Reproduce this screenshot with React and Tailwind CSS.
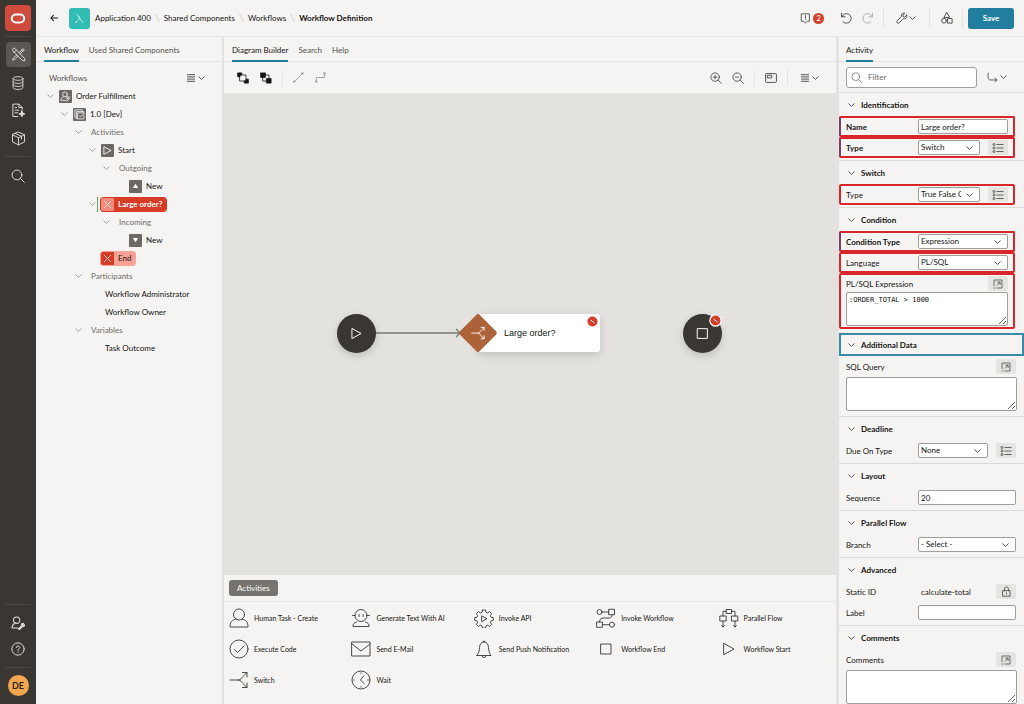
import React from 'react';

function Icon({ size = 12, sw = 1.3, className = '', children }) {
  return (
    <svg
      width={size}
      height={size}
      viewBox="0 0 20 20"
      fill="none"
      stroke="currentColor"
      strokeWidth={sw}
      strokeLinecap="round"
      strokeLinejoin="round"
      className={`shrink-0 ${className}`}
      aria-hidden="true"
    >
      {children}
    </svg>
  );
}

const Chevron = ({ className = '' }) => (
  <svg width="7" height="4" viewBox="0 0 7 4" fill="none" stroke="currentColor" strokeWidth="0.9" className={`shrink-0 ${className}`} aria-hidden="true">
    <path d="M.5 .5 3.5 3.4 6.5 .5" />
  </svg>
);

const ListIcon = () => (
  <svg width="8" height="8" viewBox="0 0 8 8" stroke="currentColor" strokeWidth="0.9" className="shrink-0" aria-hidden="true">
    <path d="M0 .7h8M0 2.9h8M0 5.1h8M0 7.3h8" />
  </svg>
);

/* ---------- Navigation rail ---------- */

const railButton = 'flex h-[25px] w-[25px] items-center justify-center rounded-[4px] text-[#dedbd7]';

function Rail() {
  return (
    <nav className="flex w-9 shrink-0 flex-col items-center bg-[#3a3632] pt-[5px] pb-2">
      <a href="#home" aria-label="Home" className="flex h-[26px] w-[26px] items-center justify-center rounded-[4px] bg-[#cf4b3e]">
        <svg width="16" height="11" viewBox="0 0 16 11" aria-hidden="true">
          <rect x="1.8" y="1.5" width="12.4" height="8" rx="4" fill="none" stroke="#fff" strokeWidth="2" />
        </svg>
      </a>
      <div className="mt-[5px] mb-[5px] h-px w-[26px] bg-[#4c4844]" />
      <div className="flex flex-col gap-[3px]">
        <button aria-label="App Builder" className={`${railButton} bg-[#5b5752]`}>
          <Icon size={15} sw={1.3}>
            <path d="M2 4.2a2.2 2.2 0 0 1 3.2-2.4L18 15.2l.5 3.3-3.3-.5L2.6 5.4ZM4.3 6.9 6.9 4.3" />
            <path d="M12.3 9.2 17.8 3.7l-1.6-1.6L10.6 7.7M9.3 12.3 4.8 16.8l-2.6.8.8-2.6L7.6 10.6M14.7 3.6l1.7 1.7" />
          </Icon>
        </button>
        <button aria-label="SQL Workshop" className={railButton}>
          <Icon size={14}>
            <ellipse cx="10" cy="3.6" rx="7" ry="2.6" />
            <path d="M3 3.6v13c0 1.5 3.2 2.6 7 2.6s7-1.1 7-2.6v-13M3 8c0 1.5 3.2 2.6 7 2.6S17 9.5 17 8M3 12.3c0 1.5 3.2 2.6 7 2.6s7-1.1 7-2.6" />
          </Icon>
        </button>
        <button aria-label="Page Designer" className={railButton}>
          <Icon size={15}>
            <path d="M9 18H2.5V1.5h8L15 6v3M10.5 1.5V6H15M5.5 6h2M5.5 9.5h5M5.5 13H9" />
            <path d="m14.5 10.5 1.1 2.9 2.9 1.1-2.9 1.1-1.1 2.9-1.1-2.9-2.9-1.1 2.9-1.1Z" fill="currentColor" />
          </Icon>
        </button>
        <button aria-label="Components" className={railButton}>
          <Icon size={15}>
            <path d="M10 1.5 18 5v9.5l-8 4-8-4V5ZM2 5l8 4 8-4M10 9v9.5M6 3.3l8 3.9v3.5" />
          </Icon>
        </button>
      </div>
      <div className="mt-[5px] mb-[6px] h-px w-[26px] bg-[#4c4844]" />
      <button aria-label="Search" className={railButton}>
        <Icon size={14} sw={1.4}>
          <circle cx="8.5" cy="8.5" r="7" />
          <path d="m13.6 13.6 5.400 5.400" />
        </Icon>
      </button>
      <div className="mt-auto h-px w-[26px] bg-[#4c4844]" />
      <div className="mt-[5px] mb-[6px] flex flex-col gap-px">
        <button aria-label="Administration" className={railButton}>
          <Icon size={14} sw={1.5}>
            <circle cx="8" cy="6" r="4.5" />
            <path d="M10 17H1.5c0-3.5 1-5 4.5-6.5" />
            <path d="M10.5 18.5 15 14c-.8-2 .5-4 2.800-3.600l-1 1.800 1 1 1.500-.8c.3 2.200-1.500 3.500-3.200 2.800L12 19.600Z" fill="currentColor" />
          </Icon>
        </button>
        <button aria-label="Help" className={railButton}>
          <Icon size={14} sw={1.4}>
            <circle cx="10" cy="10" r="8.800" />
            <path d="M7.500 8c0-3.300 5-3.300 5 0 0 1.800-2.500 1.800-2.500 4M10 14.200v.4" />
          </Icon>
        </button>
      </div>
      <div className="mb-[7px] h-px w-[26px] bg-[#4c4844]" />
      <button aria-label="Account" className="flex h-[21px] w-[21px] items-center justify-center rounded-full bg-[#f3a550] text-[9px] font-bold text-[#2a2725]">DE</button>
    </nav>
  );
}

/* ---------- Header ---------- */

const Slash = () => (
  <svg width="5" height="10" viewBox="0 0 5 10" stroke="#cfccc8" strokeWidth="0.8" aria-hidden="true">
    <path d="M.5 .5 4.500 9.500" />
  </svg>
);

const VLine = () => <div className="h-5 w-px bg-[#e4e2df]" />;

function Header() {
  return (
    <header className="flex h-[37px] shrink-0 items-center border-b border-[#e8e6e3] pr-[10px] pl-[14px]">
      <button aria-label="Back" className="mr-[11px] text-[#161513]">
        <Icon size={8} sw={2.600}>
          <path d="M19 10H2M8.500 3.500 2 10l6.500 6.500" />
        </Icon>
      </button>
      <div className="mr-[5px] flex h-[21px] w-[21px] items-center justify-center rounded-[3px] bg-[#31bdb4] text-[#c9f1ed]">
        <Icon size={13} sw={1.4}>
          <path d="M6 3.500 10.500 10 15.500 16.500M10.500 10 4 16M10.500 10l-1-3M4 16l1.500-.3" />
        </Icon>
      </div>
      <nav aria-label="Breadcrumb" className="flex items-center gap-1 whitespace-nowrap">
        <a href="#app">Application 400</a>
        <Slash />
        <a href="#shared">Shared Components</a>
        <Slash />
        <a href="#workflows">Workflows</a>
        <Slash />
        <a href="#definition" aria-current="page" className="font-bold">Workflow Definition</a>
      </nav>
      <div className="ml-auto flex items-center text-[#45413d]">
        <button aria-label="Messages" className="mr-4 flex items-center gap-[2px]">
          <Icon size={11} sw={1.500}>
            <path d="M3 1.500h14v13.500h-4l-3 3.500-3-3.500H3ZM10 4.500v4.500M10 11.500v.5" />
          </Icon>
          <span className="flex h-[11px] w-[11px] items-center justify-center rounded-full bg-[#d0402b] text-[8px] leading-none text-white">2</span>
        </button>
        <button aria-label="Undo" className="mr-[10px]">
          <Icon size={12} sw={1.500}>
            <path d="M2.500 2v6h6M3 8a8 8 0 1 1 2 8.500" />
          </Icon>
        </button>
        <button aria-label="Redo" className="mr-[9px] text-[#aba8a4]">
          <Icon size={12} sw={1.500}>
            <path d="M17.500 2v6h-6M17 8a8 8 0 1 0-2 8.500" />
          </Icon>
        </button>
        <VLine />
        <button aria-label="Utilities" className="mr-[13px] ml-3 flex items-center gap-px">
          <Icon size={12} sw={1.500}>
            <path d="M17.800 5.200 14.500 8.300l-2.600-.5-.5-2.600L14.600 2C11.500.8 8 3.500 9 7.500l-7.200 7.300c-1.800 2 1.400 5.200 3.400 3.400L12.400 11c4 1.200 7-2.300 5.400-5.800Z" />
          </Icon>
          <Chevron />
        </button>
        <VLine />
        <button aria-label="Shared components" className="mr-[9px] ml-[11px]">
          <Icon size={12} sw={1.500}>
            <path d="M10 1 14.500 9h-9Z" />
            <circle cx="5" cy="14.500" r="4" />
            <path d="M11.500 11h7v7.500h-7Z" />
          </Icon>
        </button>
        <VLine />
        <button className="ml-[5px] h-[21px] w-[46px] rounded-[3px] bg-[#227e9e] font-bold text-white">Save</button>
      </div>
    </header>
  );
}

/* ---------- Tabs ---------- */

function Tabs({ items, className = '' }) {
  return (
    <div role="tablist" className={`flex h-[25px] shrink-0 gap-[10px] border-b border-[#e4e2df] ${className}`}>
      {items.map((t, i) => (
        <button
          key={t}
          role="tab"
          aria-selected={i === 0}
          className={`-mb-px border-b-2 pt-[2px] whitespace-nowrap ${
            i === 0 ? 'border-[#227e9e] text-[#161513]' : 'border-transparent text-[#55514d]'
          }`}
        >
          {t}
        </button>
      ))}
    </div>
  );
}

/* ---------- Workflow tree ---------- */

const tileIcons = {
  person: (
    <Icon size={11} sw={1.4} className="text-white">
      <circle cx="9" cy="6" r="4.300" />
      <path d="M11 17H1.500c0-3.500 1-5 5-6.300M12 10.500l2-.5M11 13l6 1.500-5 4M14 12l4-1" />
    </Icon>
  ),
  version: (
    <Icon size={11} sw={1.3} className="text-white">
      <path d="M4 15H1.500V1.500H15V4M6 17.500H4.500V4.500h13V6M7 7h11v11H7ZM10 12.500l2 2 3.500-4" />
    </Icon>
  ),
  play: (
    <Icon size={11} sw={1.600} className="text-white">
      <path d="M4 3.500 16.500 10 4 16.500Z" />
    </Icon>
  ),
  up: (
    <svg width="7" height="6" viewBox="0 0 7 6" fill="#fff" aria-hidden="true"><path d="M3.500 .8 6.200 5H.8Z" /></svg>
  ),
  down: (
    <svg width="7" height="6" viewBox="0 0 7 6" fill="#fff" aria-hidden="true"><path d="M3.500 5.200 6.200 1H.8Z" /></svg>
  ),
  cross: (
    <Icon size={11} sw={1.3} className="text-white">
      <path d="m4 4 12 12M16 4 4 16" />
    </Icon>
  ),
};

const indent = ['pl-[10px]', 'pl-[24px]', 'pl-[38px]', 'pl-[52px]', 'pl-[66px]', 'pl-[80px]'];

const tree = [
  { level: 0, open: true, icon: 'person', text: 'Order Fulfillment' },
  { level: 1, open: true, icon: 'version', text: '1.0 [Dev]' },
  { level: 2, open: true, muted: true, text: 'Activities' },
  { level: 3, open: true, icon: 'play', text: 'Start' },
  { level: 4, open: true, muted: true, text: 'Outgoing' },
  { level: 5, icon: 'up', text: 'New' },
  { level: 3, open: true, icon: 'cross', text: 'Large order?', state: 'selected' },
  { level: 4, open: true, muted: true, text: 'Incoming' },
  { level: 5, icon: 'down', text: 'New' },
  { level: 3, icon: 'cross', text: 'End', state: 'error' },
  { level: 2, open: true, muted: true, text: 'Participants' },
  { level: 3, text: 'Workflow Administrator' },
  { level: 3, text: 'Workflow Owner' },
  { level: 2, open: true, muted: true, text: 'Variables' },
  { level: 3, text: 'Task Outcome' },
];

function TreeRow({ level, open, icon, text, muted, state }) {
  let label = 'pr-1';
  let tile = 'bg-[#6d6864]';
  if (state === 'selected') {
    label = 'rounded-[2px] bg-[#d63b25] pr-[4px] font-bold text-white outline outline-[#d63b25]';
    tile = 'bg-[#f5897a]';
  } else if (state === 'error') {
    label = 'rounded-[2px] bg-[#f9a195] pr-[4px] outline outline-[#f9a195]';
    tile = 'bg-[#d63b25]';
  }
  return (
    <li className={`flex h-[18px] items-center ${indent[level]}`}>
      <span className="flex w-[9px] shrink-0 items-center justify-center text-[#9b9793]">
        {open && <Chevron />}
      </span>
      <span className={`mr-[3px] h-[15px] w-px shrink-0 ${state === 'selected' ? 'bg-[#5da06d]' : ''}`} />
      <span className={`flex h-[13px] items-center ${label}`}>
        {icon ? (
          <span className={`mr-1 flex h-[13px] w-[13px] items-center justify-center rounded-[1px] ${tile}`}>{tileIcons[icon]}</span>
        ) : (
          <span className="w-1" />
        )}
        <span className={muted ? 'text-[#6f6b67]' : ''}>{text}</span>
      </span>
    </li>
  );
}

function TreePanel() {
  return (
    <section className="flex w-[186px] shrink-0 flex-col">
      <Tabs items={['Workflow', 'Used Shared Components']} className="pl-2" />
      <div className="flex h-[25px] items-end justify-between pr-[17px] pb-1 pl-[13px] text-[#55514d]">
        <span>Workflows</span>
        <button aria-label="Tree menu" className="flex h-[10px] items-center gap-[3px] text-[#45413d]">
          <ListIcon />
          <Chevron />
        </button>
      </div>
      <ul>{tree.map((n, i) => <TreeRow key={i} {...n} />)}</ul>
    </section>
  );
}

/* ---------- Diagram ---------- */

function Toolbar() {
  return (
    <div className="flex h-[31px] shrink-0 items-center pr-[17px] pl-[13px] text-[#45413d]">
      <button aria-label="Send to back" className="mr-[11px] text-[#161513]">
        <Icon size={12} sw={1.3}>
          <path d="M5 5h10v10H5Z" />
          <path d="M1.500 1.500H8V5H5v3H1.500ZM18.500 18.500H12V15h3v-3h3.500Z" fill="currentColor" />
        </Icon>
      </button>
      <button aria-label="Bring to front" className="text-[#161513]">
        <Icon size={12} sw={1.3}>
          <path d="M5 5h10v10H5Z" />
          <path d="M1.500 1.500H9V9H1.500ZM11 11h7.500v7.500H11Z" fill="currentColor" />
        </Icon>
      </button>
      <div className="mr-[10px] ml-[10px] h-4 w-px bg-[#e4e2df]" />
      <button aria-label="Straight line" className="mr-[11px] text-[#908c88]">
        <Icon size={11} sw={1.4}>
          <path d="M3 17 17 3M1.500 16.500h2v2h-2ZM16.500 1.500h2v2h-2Z" />
        </Icon>
      </button>
      <button aria-label="Elbow line" className="text-[#908c88]">
        <Icon size={11} sw={1.4}>
          <path d="M2.500 16v-6h15V4M1.500 16.500h2v2h-2ZM16.500 1.500h2v2h-2Z" />
        </Icon>
      </button>
      <div className="ml-auto flex items-center">
        <button aria-label="Zoom in" className="mr-[10px]">
          <Icon size={12} sw={1.4}>
            <circle cx="8.500" cy="8.500" r="7" />
            <path d="m13.600 13.600 5.400 5.400M5.500 8.500h6M8.500 5.500v6" />
          </Icon>
        </button>
        <button aria-label="Zoom out" className="mr-[10px]">
          <Icon size={12} sw={1.4}>
            <circle cx="8.500" cy="8.500" r="7" />
            <path d="m13.600 13.600 5.400 5.400M5.500 8.500h6" />
          </Icon>
        </button>
        <div className="h-4 w-px bg-[#e4e2df]" />
        <button aria-label="Overview" className="mr-[10px] ml-[10px]">
          <svg width="12" height="10" viewBox="0 0 12 10" fill="none" stroke="currentColor" strokeWidth="0.9" className="block" aria-hidden="true">
            <rect x=".6" y=".6" width="10.800" height="8.800" rx=".8" />
            <path d="M2.300 2.300h4.500v2.600H2.300Z" />
          </svg>
        </button>
        <div className="h-4 w-px bg-[#e4e2df]" />
        <button aria-label="Diagram menu" className="ml-[13px] flex items-center gap-[3px]">
          <ListIcon />
          <Chevron />
        </button>
      </div>
    </div>
  );
}

const SwitchPaths = () => <path d="M1 10h8c3 0 3.500-2 5-3.500L18 2.500M9 10c3 0 3.500 2 5 3.500l4 4M13.500 2.500H18V7M13.500 17.500H18V13" />;

const ErrorDot = () => (
  <svg width="13" height="13" viewBox="0 0 13 13" aria-hidden="true">
    <circle cx="6.500" cy="6.500" r="6.300" fill="#fff" />
    <circle cx="6.500" cy="6.500" r="5" fill="#d63b25" />
    <path d="m4.500 5 4 3" stroke="#fff" strokeWidth="1" />
  </svg>
);

function Canvas() {
  return (
    <div className="relative min-h-0 flex-1 overflow-hidden bg-[#e3e2de]">
      <svg className="absolute top-[230px] left-[150px]" width="90" height="20" viewBox="0 0 90 20" fill="none" stroke="#7b7873" aria-hidden="true">
        <path d="M0 10h86M82 6l4 4-4 4" strokeWidth="1.300" />
      </svg>
      <div className="absolute top-[221px] left-[113px] flex h-[39px] w-[39px] items-center justify-center rounded-full bg-[#3a3632] text-white shadow-[0_3px_9px_rgba(0,0,0,0.16)]">
        <Icon size={13} sw={1.500}><path d="M3.500 2.500 17 10 3.500 17.500Z" /></Icon>
      </div>
      <div className="absolute top-[221px] left-[254px] flex h-[38px] w-[122px] items-center rounded-[3px] bg-white pl-[26px] font-['Liberation_Sans',Arial,sans-serif] text-[9px] text-[#161513] shadow-[0_3px_9px_rgba(0,0,0,0.16)]">
        Large order?
        <span className="absolute top-[1px] right-[1px]"><ErrorDot /></span>
      </div>
      <svg className="absolute top-[220px] left-[234px]" width="40" height="40" viewBox="0 0 40 40" aria-hidden="true">
        <rect x="6" y="6" width="28" height="28" rx="2.500" fill="#ad633a" transform="rotate(45 20 20)" />
        <g transform="translate(12.500 12.500) scale(.76)" fill="none" stroke="#fff" strokeWidth="1.200"><SwitchPaths /></g>
      </svg>
      <div className="absolute top-[221px] left-[459px] flex h-[39px] w-[39px] items-center justify-center rounded-full bg-[#3a3632] text-white shadow-[0_3px_9px_rgba(0,0,0,0.16)]">
        <Icon size={13} sw={1.500}><path d="M2.500 2.500h15v15h-15Z" /></Icon>
        <span className="absolute top-0 right-0"><ErrorDot /></span>
      </div>
    </div>
  );
}

const palette = [
  ['Human Task - Create', <><circle cx="10" cy="6.500" r="5.500" /><path d="M7 11c-4 1-6 3-6 8h18c0-5-2-7-6-8" /></>],
  ['Generate Text With AI', <><circle cx="10" cy="7.500" r="6" /><path d="M1.500 7.500h2.500M16 7.500h2.500M8 6.500v2M12 6.500v2M5.500 14c-2.500.7-3.500 2-3.500 4.500h16c0-2.500-1-3.800-3.500-4.500" /></>],
  ['Invoke API', <><path d="M8.500 2h3l.5 2.200 1.600.7 2-1.300 2 2-1.200 2 .7 1.600 2.200.5v2.600l-2.200.5-.7 1.600 1.200 2-2 2-2-1.200-1.600.7-.5 2.200h-3l-.5-2.200-1.600-.7-2 1.200-2-2 1.200-2-.7-1.600-2.200-.5V9.700l2.200-.5.7-1.600-1.200-2 2-2 2 1.300 1.600-.7Z" /><path d="m8 8 5 2.700L8 13.500Z" /></>],
  ['Invoke Workflow', <><circle cx="3.500" cy="4" r="2.500" /><path d="M6 4H13M13 1.300h5.500v5.400H13ZM16 6.700c0 2-.5 3.300-3 3.300H8c-3 0-4.500 1-4.500 4M1 14h5.400v5.300H1ZM6.400 16.700H13.500" /><circle cx="16" cy="16.700" r="2.500" /></>],
  ['Parallel Flow', <path d="M7.500 1.500h5v4h-5ZM7.500 3.300H4V8M12.500 3.300H16V8M1.200 8h6v5h-6ZM12.800 8h6v5h-6ZM4 13v6M16 13v6M2.500 17.500l1.500 1.500 1.500-1.500M14.500 17.500l1.500 1.500 1.500-1.500" />],
  ['Execute Code', <><circle cx="10" cy="10" r="9" /><path d="m5.500 10.500 3 3 6.500-6.500" /></>],
  ['Send E-Mail', <path d="M1 3h18v14H1ZM1 5l9 7 9-7" />],
  ['Send Push Notification', <path d="M3 16.500h14c-2-3-2.200-4.500-2.500-8C14.300 5 12.500 3 10 3S5.700 5 5.500 8.500C5.200 12 5 13.500 3 16.500ZM9 3a1 1 0 0 1 2 0M8 16.500a2 2 0 0 0 4 0" />],
  ['Workflow End', <path d="M5 5h10v10H5Z" />],
  ['Workflow Start', <path d="M5 4.500 15 10 5 15.500Z" />],
  ['Switch', <SwitchPaths />],
  ['Wait', <><circle cx="10" cy="10" r="9" /><path d="M12.500 6 9.500 10l3.500 3.500M10 2.800v.6M10 16.600v.6M2.800 10h.6M16.600 10h.6" /></>],
];

function Palette() {
  return (
    <div className="h-[129px] shrink-0">
      <div className="flex h-[27px] items-center border-b border-[#e8e6e3] pl-[5px]">
        <button className="h-4 rounded-[3px] bg-[#77736e] px-2 text-white">Activities</button>
      </div>
      <ul className="grid grid-cols-5 text-[7px]">
        {palette.map(([name, icon]) => (
          <li key={name} className="flex h-[31px] items-center gap-[5px] pl-[5px] whitespace-nowrap">
            <Icon size={20} sw={0.9} className="text-[#3a3632]">{icon}</Icon>
            {name}
          </li>
        ))}
      </ul>
    </div>
  );
}

/* ---------- Property editor ---------- */

const field = 'h-[15px] w-full min-w-0 rounded-[2px] border border-[#a19d99] bg-white pl-[2px] text-[8px] leading-[13px] text-[#161513]';
const sideButton = 'flex h-[15px] w-5 shrink-0 items-center justify-center rounded-[2px] bg-[#e6e4e1] text-[#45413d]';

const QuickPick = () => (
  <button aria-label="Quick pick" className={sideButton}>
    <svg width="12" height="10" viewBox="0 0 12 10" fill="none" stroke="currentColor" strokeWidth="0.8" aria-hidden="true">
      <path d="M4.500 1.500h7M4.500 5h7M4.500 8.500h7" />
      <circle cx="2" cy="1.500" r="1" />
      <circle cx="2" cy="5" r="1" />
      <circle cx="2" cy="8.500" r="1" />
    </svg>
  </button>
);

const OpenEditor = () => (
  <button aria-label="Open code editor" className={sideButton}>
    <Icon size={10} sw={1.500}>
      <path d="M2 13V2h16v16H8M2 18h2M8 12.500l6-6M9 6.300h5.200v5.200" />
    </Icon>
  </button>
);

function Select({ id, value }) {
  return (
    <div className="relative min-w-0 flex-1">
      <select id={id} defaultValue={value} className={`${field} block appearance-none pr-[18px]`}>
        <option>{value}</option>
      </select>
      <Chevron className="pointer-events-none absolute top-[6px] right-[7px] text-[#45413d]" />
    </div>
  );
}

function Row({ id, label, required, marked, changed, children }) {
  return (
    <div
      className={`flex h-[21px] items-center ${
        marked ? 'mr-[9px] rounded-[2px] border-2 border-[#d9262b] pr-[5px] pl-[5px]' : 'pr-2 pl-[7px]'
      } ${changed ? 'border-l-[#7c3f63]' : ''}`}
    >
      <label htmlFor={id} className={`w-[72px] shrink-0 ${required ? 'font-bold' : ''}`}>{label}</label>
      <div className="flex min-w-0 flex-1 items-center gap-2">{children}</div>
    </div>
  );
}

function Section({ title, first, focused, children }) {
  return (
    <section className={`pb-[2px] ${first || focused ? '' : 'border-t border-[#dcdad7]'}`}>
      <h3>
        <button
          className={`flex h-[23px] w-full items-center gap-[6px] font-bold ${
            focused ? 'border-2 border-[#3b8ba8] pl-[7px]' : 'pl-[9px]'
          }`}
        >
          <Chevron className="text-[#45413d]" />
          {title}
        </button>
      </h3>
      {children}
    </section>
  );
}

const area = 'block h-[34px] w-full resize rounded-[2px] border border-[#a19d99] bg-white px-[2px] py-[3px]';

function CodeField({ id, label }) {
  return (
    <div className="px-[7px] pb-[3px]">
      <div className="flex h-[21px] items-center justify-between pr-px">
        <label htmlFor={id}>{label}</label>
        <OpenEditor />
      </div>
      <textarea id={id} className={area} />
    </div>
  );
}

function Properties() {
  return (
    <section className="flex w-[185px] shrink-0 flex-col overflow-hidden">
      <Tabs items={['Activity']} className="pl-[7px]" />
      <div className="flex h-[31px] shrink-0 items-center gap-[10px] border-b border-[#e4e2df] pr-[17px] pl-[7px]">
        <label className="flex h-[21px] min-w-0 flex-1 items-center gap-[6px] rounded-[3px] border border-[#a19d99] bg-white px-1 text-[#77736e]">
          <Icon size={11} sw={1.4}>
            <circle cx="8.500" cy="8.500" r="7" />
            <path d="m13.600 13.600 5.400 5.400" />
          </Icon>
          <input aria-label="Filter" placeholder="Filter" className="w-full min-w-0 text-[8px] outline-none placeholder:text-[#6f6b67]" />
        </label>
        <button aria-label="Go to group" className="flex items-center gap-[2px] text-[#45413d]">
          <Icon size={11} sw={1.500}>
            <path d="M2 2v7c0 4 1.500 5.500 5 5.500h11M14.500 11l3.500 3.500-3.500 3.500" />
          </Icon>
          <Chevron />
        </button>
      </div>

      <Section title="Identification" first>
        <Row id="name" label="Name" required marked changed>
          <input id="name" defaultValue="Large order?" className={field} />
        </Row>
        <Row id="type" label="Type" required marked changed>
          <Select id="type" value="Switch" />
          <QuickPick />
        </Row>
      </Section>

      <Section title="Switch">
        <Row id="switch-type" label="Type" marked>
          <Select id="switch-type" value="True False Check" />
          <QuickPick />
        </Row>
      </Section>

      <Section title="Condition">
        <Row id="condition" label="Condition Type" required marked changed>
          <Select id="condition" value="Expression" />
        </Row>
        <Row id="language" label="Language" marked>
          <Select id="language" value="PL/SQL" />
        </Row>
        <div className="mr-[9px] mb-[2px] rounded-[2px] border-2 border-[#d9262b] pr-[5px] pb-px pl-[5px]">
          <div className="flex h-[17px] items-center justify-between">
            <label htmlFor="expression">PL/SQL Expression</label>
            <OpenEditor />
          </div>
          <textarea id="expression" defaultValue=":ORDER_TOTAL > 1000" className={`${area} font-['DejaVu_Sans_Mono',monospace] text-[7px] leading-[8px]`} />
        </div>
      </Section>

      <Section title="Additional Data" focused>
        <CodeField id="query" label="SQL Query" />
      </Section>

      <Section title="Deadline">
        <Row id="due" label="Due On Type">
          <Select id="due" value="None" />
          <QuickPick />
        </Row>
      </Section>

      <Section title="Layout">
        <Row id="sequence" label="Sequence">
          <input id="sequence" defaultValue="20" className={field} />
        </Row>
      </Section>

      <Section title="Parallel Flow">
        <Row id="branch" label="Branch">
          <Select id="branch" value="- Select -" />
        </Row>
      </Section>

      <Section title="Advanced">
        <Row id="static-id" label="Static ID">
          <output id="static-id" className="flex-1 pl-[3px]">calculate-total</output>
          <button aria-label="Unlock" className={sideButton}>
            <Icon size={11} sw={1.500}>
              <path d="M3.500 8.500h13v10h-13ZM6.500 8.500V5c0-4.500 7-4.500 7 0v3.500M10 12.500v2" />
            </Icon>
          </button>
        </Row>
        <Row id="label" label="Label">
          <input id="label" className={field} />
        </Row>
      </Section>

      <Section title="Comments">
        <CodeField id="comments" label="Comments" />
      </Section>
    </section>
  );
}

export default function App() {
  return (
    <div className="flex h-screen overflow-hidden bg-[#f5f4f2] font-[Lato,'Open_Sans',sans-serif] text-[8px] leading-[10px] text-[#161513]">
      <Rail />
      <div className="flex min-w-0 flex-1 flex-col">
        <Header />
        <main className="flex min-h-0 flex-1">
          <TreePanel />
          <div className="w-[2px] shrink-0 bg-[#e4e2df]" />
          <section className="flex min-w-0 flex-1 flex-col">
            <Tabs items={['Diagram Builder', 'Search', 'Help']} className="pl-2" />
            <Toolbar />
            <Canvas />
            <Palette />
          </section>
          <div className="w-[3px] shrink-0 bg-[#e4e2df]" />
          <Properties />
        </main>
      </div>
    </div>
  );
}
